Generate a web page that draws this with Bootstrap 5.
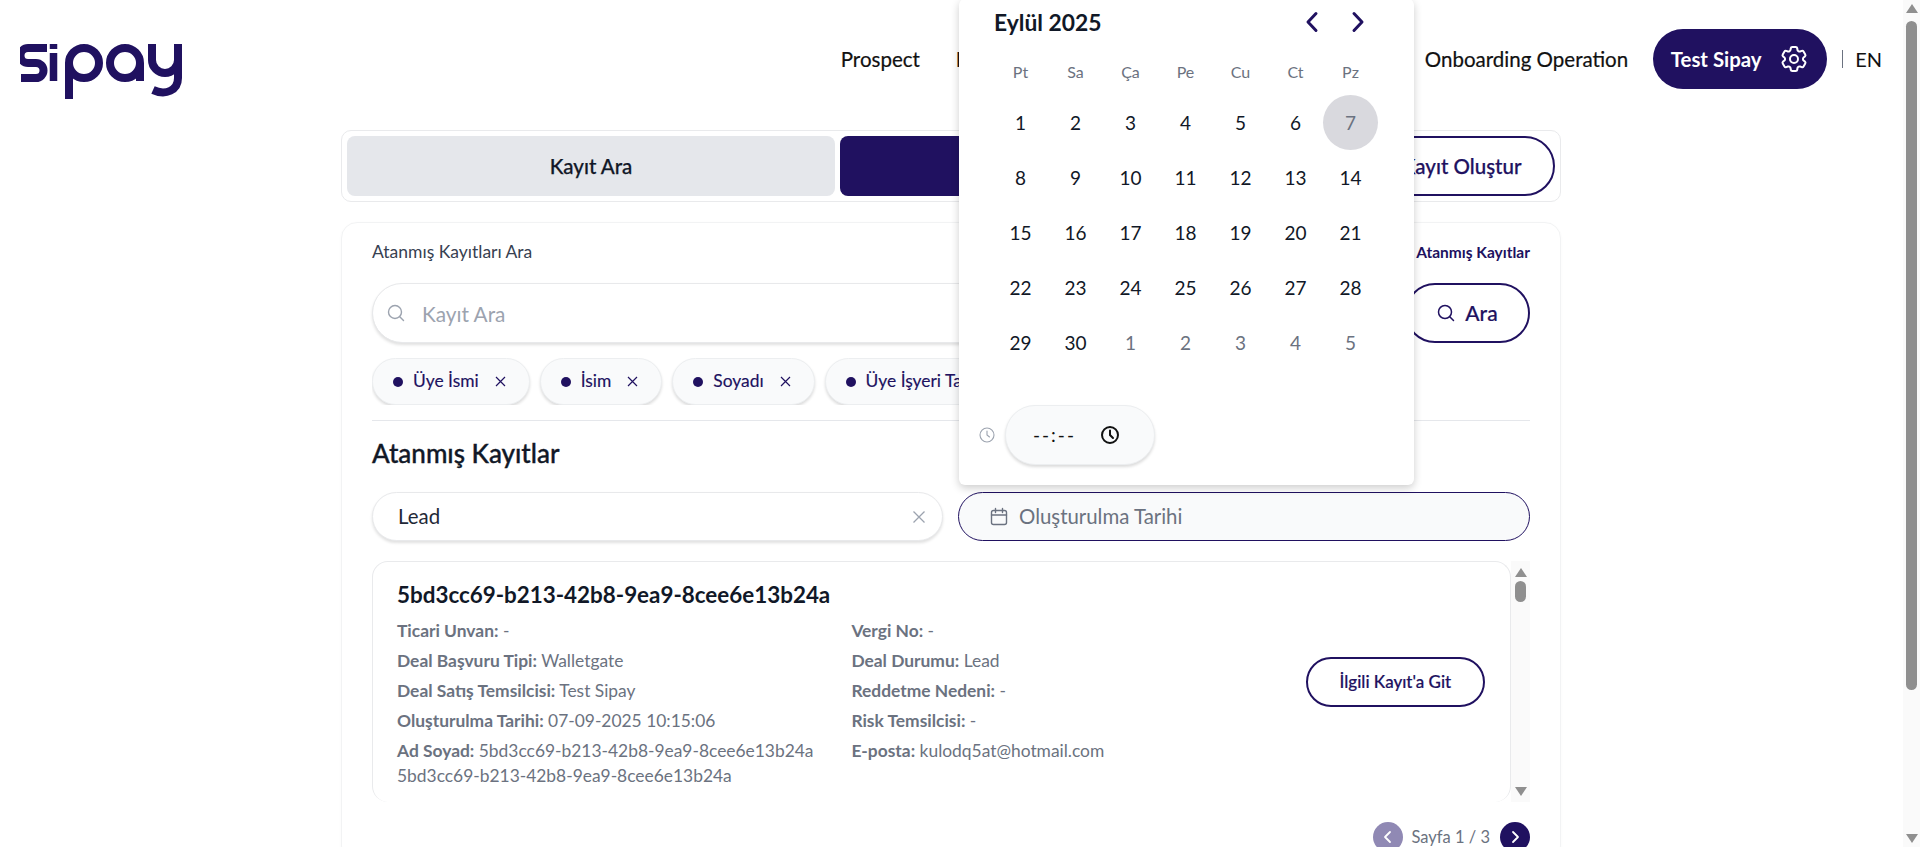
<!DOCTYPE html>
<html lang="tr">
<head>
    <meta charset="UTF-8">
    <meta name="viewport" content="width=device-width, initial-scale=1.0">
    <title>Sipay</title>
    <link href="https://cdn.jsdelivr.net/npm/bootstrap@5.3.2/dist/css/bootstrap.min.css" rel="stylesheet">
    <style>
        html, body { height: 100%; overflow: hidden; }
        body { font-family: "Lato", "Noto Sans", sans-serif; color: #111827; background: #fff; }
        svg { display: block; flex-shrink: 0; }

        .page-shell { height: 847px; overflow: hidden; }
        .page-main { width: 1903px; flex-shrink: 0; }
        .page-scroll { width: 17px; background: #fafafa; padding: 0 3px; }
        .page-thumb { width: 11px; height: 669px; margin-top: 8px; background: #8f8f8f; border-radius: 6px; }
        .arrow-up, .arrow-down { width: 0; height: 0; border-left: 6px solid transparent; border-right: 6px solid transparent; }
        .arrow-up { border-bottom: 9px solid #8f8f8f; }
        .arrow-down { border-top: 9px solid #8f8f8f; }

        .top-head { height: 130px; padding: 29px 21px 0 20px; }
        .site-logo { margin-top: 15px; }
        .top-nav { gap: 36px; font-size: 20.5px; color: #111; height: 60px; -webkit-text-stroke: .2px #111; }
        .top-nav .hidden-item { width: 433px; white-space: nowrap; overflow: hidden; }
        .user-btn { height: 60px; width: 174px; background: #201160; color: #fff; border-radius: 30px; font-size: 20.4px; font-weight: 700; border: 0; margin-left: 25px; }
        .user-btn:hover { background: #201160; color: #fff; }
        .lang-sep { width: 1px; height: 18px; background: #6b7280; margin: 0 12px 0 15px; }
        .lang-txt { font-size: 20px; color: #111; }

        .content-wrap { width: 1220px; margin: 0 0 0 341px; }
        .tabs-box { height: 72px; border: 1px solid #e9eaec; border-radius: 10px; padding: 5px; gap: 5px; margin-bottom: 20px; }
        .tab-item { width: 488px; height: 60px; border: 0; border-radius: 8px; font-size: 20.5px; font-weight: 500; -webkit-text-stroke: .25px currentColor; }
        .tab-off { background: #e5e7eb; color: #111827; }
        .tab-on { background: #201160; color: #fff; }
        .tab-new { flex: 1; height: 60px; border: 2px solid #201160; border-radius: 30px; background: #fff; color: #201160; font-size: 20.5px; font-weight: 500; padding: 0 8px 0 0; -webkit-text-stroke: .25px currentColor; }

        .main-panel { border: 1px solid #f2f3f4; border-radius: 16px; padding: 19px 30px 0; height: 640px; box-shadow: 0 1px 3px rgba(0,0,0,.03); }
        .small-head { font-size: 17.5px; color: #374151; line-height: 20px; }
        .all-link { font-size: 15.5px; font-weight: 700; color: #201160; line-height: 20px; }
        .search-row { margin-top: 21px; gap: 12px; }
        .field-wrap { position: relative; flex: 1; }
        .field-wrap svg { position: absolute; left: 15px; top: 21px; color: #9ca3af; }
        .search-input { height: 60px; border-radius: 30px; padding-left: 49px; font-size: 20.8px; border: 1px solid #e8e9eb; box-shadow: 0 2px 3px rgba(0,0,0,.12); }
        .search-input::placeholder { color: #9ca3af; }
        .search-btn { width: 125px; height: 60px; border: 2px solid #201160; border-radius: 30px; color: #201160; background: #fff; font-size: 21px; font-weight: 500; gap: 10px; -webkit-text-stroke: .2px currentColor; }

        .chip-row { margin-top: 15px; gap: 10px; overflow: hidden; }
        .chip-item { height: 47px; padding: 0 23px 0 20px; background: #f9fafb; border: 1px solid #eceef0; border-radius: 24px; box-shadow: 0 2px 3px rgba(0,0,0,.14); color: #201160; font-size: 17.4px; gap: 10px; white-space: nowrap; flex-shrink: 0; -webkit-text-stroke: .15px currentColor; }
        .chip-dot { width: 10px; height: 10px; border-radius: 50%; background: #201160; }
        .chip-x { margin-left: 6px; }
        .sep-line { border-top: 1px solid #e5e7eb; margin-top: 15px; }
        .list-title { font-size: 26px; font-weight: 500; color: #111827; margin: 15px 0 0; line-height: 34px; -webkit-text-stroke: .35px #111827; }

        .filter-row { margin-top: 22px; gap: 15px; }
        .filter-box { height: 49px; border-radius: 25px; font-size: 20.4px; padding: 0 16px 0 25px; position: relative; }
        .filter-lead { width: calc(50% - 8px); flex-shrink: 0; background: #fff; border: 1px solid #e8e9eb; box-shadow: 0 2px 3px rgba(0,0,0,.12); color: #1f2937; }
        .filter-date { flex: 1; min-width: 0; background: #f9fafb; border: 1px solid #201160; color: #6b7280; padding-left: 30px; gap: 10px; }

        .calendar-pop { position: absolute; left: 0; bottom: 55px; width: 455px; background: #fff; border-radius: 6px; box-shadow: 0 3px 8px rgba(0,0,0,.2); padding: 0 28px 20px 20px; color: #111827; }
        .cal-head { height: 46px; margin-bottom: 4px; padding-left: 15px; }
        .cal-month { font-size: 22.8px; font-weight: 700; }
        .cal-nav { gap: 24px; color: #201160; margin-right: 17px; }
        .cal-grid { display: grid; grid-template-columns: repeat(7, 55px); margin-left: 14px; }
        .cal-wd { height: 46px; font-size: 16px; color: #6b7280; }
        .cal-day { height: 55px; font-size: 19px; padding-top: 2px; }
        .cal-muted { color: #6b7280; }
        .cal-today { background: #d9d9de; border-radius: 50%; color: #6b7280; }
        .time-row { margin-top: 35px; gap: 10px; }
        .time-box { width: 150px; height: 60px; background: #f9fafb; border: 1px solid #eceef0; border-radius: 30px; box-shadow: 0 2px 3px rgba(0,0,0,.14); padding: 0 34px 0 27px; font-size: 19px; color: #111; letter-spacing: 2px; }

        .record-wrap { margin-top: 20px; height: 241px; }
        .record-box { flex: 1; border: 1px solid #e9eaec; border-bottom: 0; border-radius: 16px; padding: 16px 25px 0 24px; overflow: hidden; }
        .record-title { font-size: 22.4px; font-weight: 700; line-height: 34px; color: #111827; margin-bottom: 6px; }
        .record-col { width: 462px; font-size: 17.4px; color: #6b7280; }
        .record-col p { margin: 0 0 5px; line-height: 25px; }
        .record-col b { font-weight: 700; }
        .go-btn { width: 182px; height: 50px; border: 2px solid #201160; border-radius: 25px; background: #fff; color: #201160; font-size: 17px; font-weight: 500; margin-left: auto; margin-top: 39px; -webkit-text-stroke: .2px currentColor; }
        .inner-scroll { width: 19px; background: #fafafa; padding: 7px 4px 6px; }
        .inner-thumb { width: 11px; height: 21px; background: #8f8f8f; border-radius: 6px; margin-top: 4px; }

        .pager-row { margin-top: 20px; gap: 8px; font-size: 16.5px; color: #6b7280; }
        .pager-btn { width: 30px; height: 30px; border-radius: 50%; color: #fff; border: 0; padding: 0; }
        .pager-prev { background: #9089b4; }
        .pager-next { background: #201160; margin-left: 2px; }
    </style>
</head>
<body>
    <div class="page-shell d-flex">
        <div class="page-main">
            <!-- Header -->
            <header class="top-head d-flex justify-content-between align-items-start">
                <svg class="site-logo" width="163" height="56" viewBox="20 44 163 56" fill="none" stroke="#201160" stroke-width="8">
                    <path d="M47 48H28a7.5 7.5 0 0 0 0 15h8a7.5 7.5 0 0 1 0 15H21"/>
                    <path d="M53.500 44v5M53.500 53v28" stroke-width="7.5"/>
                    <circle cx="84" cy="63" r="15"/>
                    <path d="M69 63v36"/>
                    <circle cx="125" cy="63" r="15"/>
                    <path d="M140 63v18"/>
                    <path d="M152 44v16a13 13 0 0 0 26 0V44"/>
                    <path d="M178 58v20c0 12-12 18-25 12"/>
                </svg>
                <div class="d-flex align-items-center">
                    <nav class="top-nav d-flex align-items-center">
                        <span>Prospect</span>
                        <span class="hidden-item">Lead</span>
                        <span>Onboarding Operation</span>
                    </nav>
                    <button class="btn user-btn d-flex align-items-center justify-content-center gap-3">
                        Test Sipay
                        <svg width="32" height="32" viewBox="0 0 24 24" fill="none" stroke="currentColor" stroke-width="1.5" stroke-linecap="round" stroke-linejoin="round"><path d="M9.594 3.94c.09-.542.56-.94 1.11-.94h2.593c.55 0 1.02.398 1.11.94l.213 1.281c.063.374.313.686.645.87.074.04.147.083.22.127.325.196.72.257 1.075.124l1.217-.456a1.125 1.125 0 0 1 1.37.49l1.296 2.247a1.125 1.125 0 0 1-.26 1.431l-1.003.827c-.293.241-.438.613-.43.992a7.723 7.723 0 0 1 0 .255c-.008.378.137.75.43.991l1.004.827c.424.35.534.955.26 1.43l-1.298 2.247a1.125 1.125 0 0 1-1.369.491l-1.217-.456c-.355-.133-.75-.072-1.076.124a6.47 6.47 0 0 1-.22.128c-.331.183-.581.495-.644.869l-.213 1.281c-.09.543-.56.94-1.11.94h-2.594c-.55 0-1.019-.398-1.11-.94l-.213-1.281c-.062-.374-.312-.686-.644-.87a6.52 6.52 0 0 1-.22-.127c-.325-.196-.72-.257-1.076-.124l-1.217.456a1.125 1.125 0 0 1-1.369-.49l-1.297-2.247a1.125 1.125 0 0 1 .26-1.431l1.004-.827c.292-.24.437-.613.43-.991a6.932 6.932 0 0 1 0-.255c.007-.38-.138-.751-.43-.992l-1.004-.827a1.125 1.125 0 0 1-.26-1.43l1.297-2.247a1.125 1.125 0 0 1 1.37-.491l1.216.456c.356.133.751.072 1.076-.124.072-.044.146-.086.22-.128.332-.183.582-.495.644-.869l.214-1.28Z"/><circle cx="12" cy="12" r="3"/></svg>
                    </button>
                    <span class="lang-sep"></span>
                    <span class="lang-txt">EN</span>
                </div>
            </header>

            <main class="content-wrap">
                <!-- Tabs -->
                <div class="tabs-box d-flex">
                    <button class="tab-item tab-off">Kayıt Ara</button>
                    <button class="tab-item tab-on">Atanmış Kayıtlar</button>
                    <button class="tab-new">Yeni Kayıt Oluştur</button>
                </div>

                <section class="main-panel">
                    <div class="d-flex justify-content-between">
                        <span class="small-head">Atanmış Kayıtları Ara</span>
                        <span class="all-link">Atanmış Kayıtlar</span>
                    </div>
                    <div class="search-row d-flex">
                        <div class="field-wrap">
                            <svg width="18" height="18" viewBox="0 0 18 18" fill="none" stroke="currentColor" stroke-width="1.4" stroke-linecap="round"><circle cx="8" cy="8" r="6.5"/><path d="M13 13l3.5 3.5"/></svg>
                            <input class="form-control search-input" type="text" placeholder="Kayıt Ara">
                        </div>
                        <button class="search-btn d-flex align-items-center justify-content-center">
                            <svg width="18" height="18" viewBox="0 0 18 18" fill="none" stroke="currentColor" stroke-width="1.5" stroke-linecap="round"><circle cx="8" cy="8" r="6.5"/><path d="M13 13l3.5 3.5"/></svg>
                            Ara
                        </button>
                    </div>
                    <div class="chip-row d-flex">
                        <span class="chip-item d-flex align-items-center"><span class="chip-dot"></span>Üye İsmi<svg class="chip-x" width="11" height="11" viewBox="0 0 11 11" stroke="currentColor" stroke-width="1.2"><path d="M1 1l9 9M10 1l-9 9"/></svg></span>
                        <span class="chip-item d-flex align-items-center"><span class="chip-dot"></span>İsim<svg class="chip-x" width="11" height="11" viewBox="0 0 11 11" stroke="currentColor" stroke-width="1.2"><path d="M1 1l9 9M10 1l-9 9"/></svg></span>
                        <span class="chip-item d-flex align-items-center"><span class="chip-dot"></span>Soyadı<svg class="chip-x" width="11" height="11" viewBox="0 0 11 11" stroke="currentColor" stroke-width="1.2"><path d="M1 1l9 9M10 1l-9 9"/></svg></span>
                        <span class="chip-item d-flex align-items-center"><span class="chip-dot"></span>Üye İşyeri Tabelası<svg class="chip-x" width="11" height="11" viewBox="0 0 11 11" stroke="currentColor" stroke-width="1.2"><path d="M1 1l9 9M10 1l-9 9"/></svg></span>
                    </div>
                    <div class="sep-line"></div>
                    <h2 class="list-title">Atanmış Kayıtlar</h2>

                    <div class="filter-row d-flex">
                        <div class="filter-box filter-lead d-flex align-items-center justify-content-between">
                            Lead
                            <svg width="14" height="14" viewBox="0 0 14 14" stroke="#9ca3af" stroke-width="1.3"><path d="M1.5 1.5l11 11M12.5 1.5l-11 11"/></svg>
                        </div>
                        <div class="filter-box filter-date d-flex align-items-center">
                            <svg width="20" height="20" viewBox="0 0 20 20" fill="none" stroke="currentColor" stroke-width="1.4" stroke-linecap="round"><rect x="2.5" y="3.5" width="15" height="14" rx="2"/><path d="M2.5 8h15M6.5 1.5v4M13.5 1.5v4"/></svg>
                            Oluşturulma Tarihi

                            <!-- Date picker popup -->
                            <div class="calendar-pop">
                                <div class="cal-head d-flex align-items-center justify-content-between">
                                    <span class="cal-month">Eylül 2025</span>
                                    <div class="cal-nav d-flex align-items-center">
                                        <svg width="22" height="22" viewBox="0 0 22 22" fill="none" stroke="currentColor" stroke-width="3" stroke-linecap="round" stroke-linejoin="round"><path d="M15 2.500L7 11l8 8.500"/></svg>
                                        <svg width="22" height="22" viewBox="0 0 22 22" fill="none" stroke="currentColor" stroke-width="3" stroke-linecap="round" stroke-linejoin="round"><path d="M7 2.500L15 11l-8 8.500"/></svg>
                                    </div>
                                </div>
                                <div class="cal-grid text-center" id="calGrid"></div>
                                <div class="time-row d-flex align-items-center">
                                    <svg width="16" height="16" viewBox="0 0 16 16" fill="none" stroke="#9ca3af" stroke-width="1.1" stroke-linecap="round"><circle cx="8" cy="8" r="7"/><path d="M8 4v4l2.500 2"/></svg>
                                    <div class="time-box d-flex align-items-center justify-content-between">
                                        <span>--:--</span>
                                        <svg width="20" height="20" viewBox="0 0 20 20" fill="none" stroke="#111" stroke-width="2" stroke-linecap="round"><circle cx="10" cy="10" r="8"/><path d="M10 5.500V10l3 3"/></svg>
                                    </div>
                                </div>
                            </div>
                        </div>
                    </div>

                    <div class="record-wrap d-flex">
                        <div class="record-box">
                            <div class="record-title">5bd3cc69-b213-42b8-9ea9-8cee6e13b24a</div>
                            <div class="d-flex">
                                <div class="record-col">
                                    <p><b>Ticari Unvan:</b> -</p>
                                    <p><b>Deal Başvuru Tipi:</b> Walletgate</p>
                                    <p><b>Deal Satış Temsilcisi:</b> Test Sipay</p>
                                    <p><b>Oluşturulma Tarihi:</b> 07-09-2025 10:15:06</p>
                                    <p><b>Ad Soyad:</b> 5bd3cc69-b213-42b8-9ea9-8cee6e13b24a<br>5bd3cc69-b213-42b8-9ea9-8cee6e13b24a</p>
                                </div>
                                <div class="record-col">
                                    <p><b>Vergi No:</b> -</p>
                                    <p><b>Deal Durumu:</b> Lead</p>
                                    <p><b>Reddetme Nedeni:</b> -</p>
                                    <p><b>Risk Temsilcisi:</b> -</p>
                                    <p><b>E-posta:</b> kulodq5at@hotmail.com</p>
                                </div>
                                <button class="go-btn">İlgili Kayıt'a Git</button>
                            </div>
                        </div>
                        <div class="inner-scroll d-flex flex-column align-items-center">
                            <span class="arrow-up"></span>
                            <span class="inner-thumb"></span>
                            <span class="arrow-down mt-auto"></span>
                        </div>
                    </div>

                    <div class="pager-row d-flex align-items-center justify-content-end">
                        <button class="pager-btn pager-prev d-flex align-items-center justify-content-center"><svg width="14" height="14" viewBox="0 0 14 14" fill="none" stroke="currentColor" stroke-width="1.8" stroke-linecap="round" stroke-linejoin="round"><path d="M9 2L4 7l5 5"/></svg></button>
                        <span>Sayfa 1 / 3</span>
                        <button class="pager-btn pager-next d-flex align-items-center justify-content-center"><svg width="14" height="14" viewBox="0 0 14 14" fill="none" stroke="currentColor" stroke-width="1.8" stroke-linecap="round" stroke-linejoin="round"><path d="M5 2l5 5-5 5"/></svg></button>
                    </div>
                </section>
            </main>
        </div>

        <!-- Page scrollbar -->
        <div class="page-scroll d-flex flex-column align-items-center pt-1">
            <span class="arrow-up"></span>
            <span class="page-thumb"></span>
            <span class="arrow-down mt-auto mb-1"></span>
        </div>
    </div>

    <script src="https://cdn.jsdelivr.net/npm/bootstrap@5.3.2/dist/js/bootstrap.bundle.min.js"></script>
    <script>
        // Calendar cells
        const grid = document.getElementById('calGrid');
        const weekDays = ['Pt', 'Sa', 'Ça', 'Pe', 'Cu', 'Ct', 'Pz'];
        const days = [];
        for (let d = 1; d <= 30; d++) days.push({ n: d, muted: false });
        for (let d = 1; d <= 5; d++) days.push({ n: d, muted: true });

        weekDays.forEach(w => {
            grid.insertAdjacentHTML('beforeend', '<div class="cal-wd d-flex align-items-center justify-content-center">' + w + '</div>');
        });
        days.forEach(item => {
            let cls = 'cal-day d-flex align-items-center justify-content-center';
            if (item.muted) cls += ' cal-muted';
            if (item.n === 7 && !item.muted) cls += ' cal-today';
            grid.insertAdjacentHTML('beforeend', '<div class="' + cls + '">' + item.n + '</div>');
        });
    </script>
</body>
</html>
